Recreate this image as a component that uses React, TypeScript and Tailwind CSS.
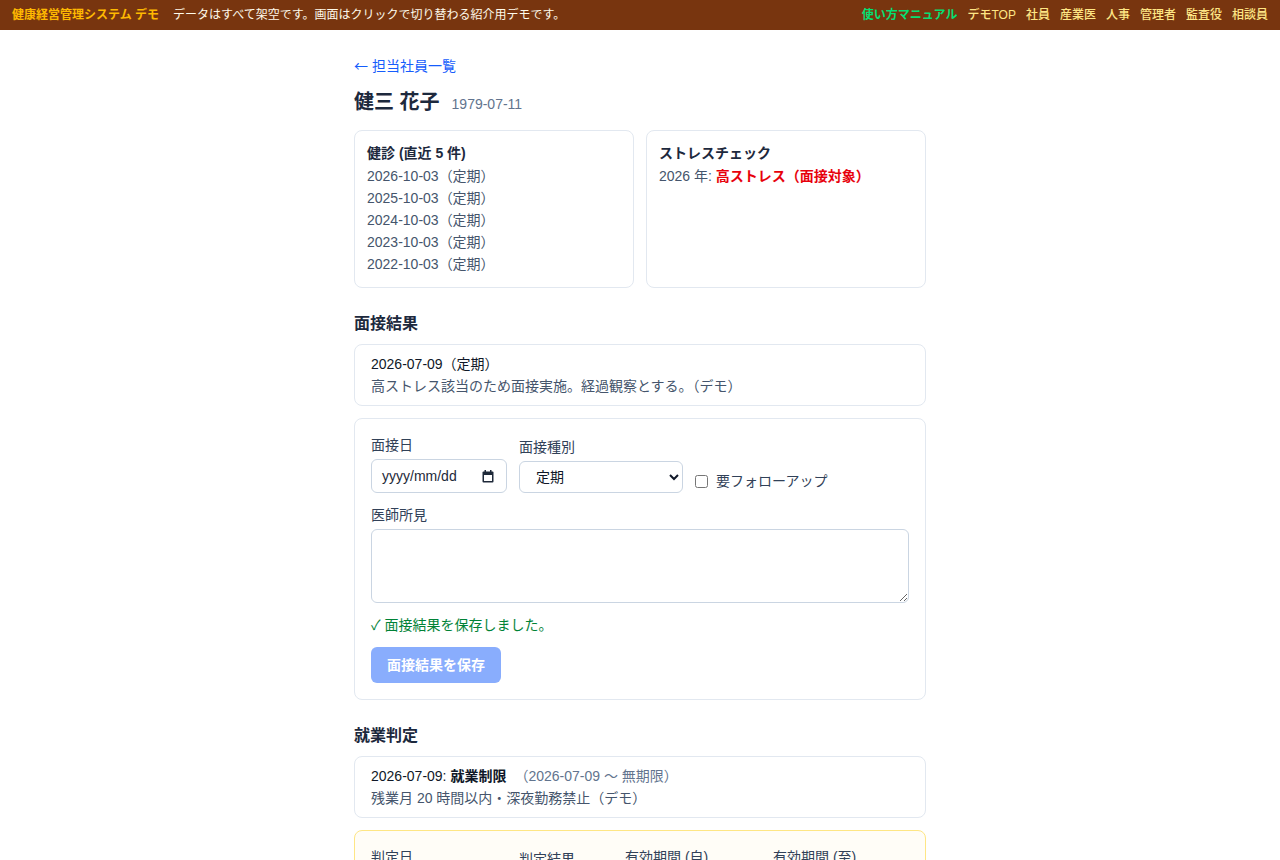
import React from "react";

const navLinks = ["デモTOP", "社員", "産業医", "人事", "管理者", "監査役", "相談員"];
const checkups = ["2026-10-03", "2025-10-03", "2024-10-03", "2023-10-03", "2022-10-03"];

const CalendarIcon = () => (
  <svg width="12" height="13" viewBox="0 0 12 13" className="text-gray-800">
    <rect x="0.5" y="1.5" width="11" height="11" rx="1" fill="currentColor" />
    <rect x="2" y="5" width="8" height="6" fill="white" />
    <rect x="2.5" y="0" width="1.5" height="3" fill="currentColor" />
    <rect x="8" y="0" width="1.5" height="3" fill="currentColor" />
  </svg>
);

const DateField = () => (
  <div className="flex h-[34px] w-[136px] items-center justify-between rounded-md border border-slate-300 bg-white pl-[10px] pr-3 text-sm text-gray-800">
    <span>yyyy/mm/dd</span>
    <CalendarIcon />
  </div>
);

const TopBar = () => (
  <header className="flex h-[30px] items-center justify-between bg-[#78350f] px-3 text-xs">
    <div className="flex items-center gap-[14px]">
      <span className="font-bold text-amber-400">健康経営管理システム デモ</span>
      <span className="text-amber-50">データはすべて架空です。画面はクリックで切り替わる紹介用デモです。</span>
    </div>
    <nav className="flex items-center gap-2.5 font-medium">
      <a className="font-bold text-green-400">使い方マニュアル</a>
      {navLinks.map((l) => (
        <a key={l} className="text-amber-200">
          {l}
        </a>
      ))}
    </nav>
  </header>
);

export default function App() {
  return (
    <div className="min-h-screen bg-white font-['Liberation_Sans','Noto_Sans_CJK_JP',sans-serif]">
      <TopBar />
      <main className="mx-auto w-[572px] pt-[25px] pb-16">
        <a className="block text-sm leading-5 text-blue-600">
          <span className="font-['Noto_Sans_CJK_JP',sans-serif]">←</span> 担当社員一覧
        </a>
        <div className="mt-3 flex items-baseline">
          <h1 className="text-xl font-bold leading-7 text-slate-800">健三 花子</h1>
          <span className="ml-3 text-sm text-slate-500">1979-07-11</span>
        </div>

        <div className="mt-[14px] grid grid-cols-2 gap-3">
          <div className="rounded-lg border border-slate-200 p-3">
            <h2 className="text-sm font-bold leading-5 text-slate-800">健診 (直近 5 件)</h2>
            <ul className="mt-0.5 text-sm leading-[22px] text-slate-600">
              {checkups.map((d) => (
                <li key={d}>{d}（定期）</li>
              ))}
            </ul>
          </div>
          <div className="rounded-lg border border-slate-200 p-3">
            <h2 className="text-sm font-bold leading-5 text-slate-800">ストレスチェック</h2>
            <p className="mt-0.5 text-sm leading-[22px] text-slate-600">
              2026 年: <span className="font-bold text-red-600">高ストレス（面接対象）</span>
            </p>
          </div>
        </div>

        <h2 className="mt-6 mb-2 text-base font-bold leading-6 text-slate-800">面接結果</h2>
        <div className="rounded-lg border border-slate-200 px-4 py-2 text-sm leading-[22px]">
          <p className="text-gray-900">2026-07-09（定期）</p>
          <p className="text-slate-600">高ストレス該当のため面接実施。経過観察とする。（デモ）</p>
        </div>

        <div className="mt-3 rounded-lg border border-slate-200 p-4">
          <div className="flex items-end gap-3">
            <label className="block">
              <span className="block text-sm leading-5 text-slate-700">面接日</span>
              <div className="mt-1">
                <DateField />
              </div>
            </label>
            <label className="block">
              <span className="block text-sm leading-5 text-slate-700">面接種別</span>
              <select className="mt-1 h-8 w-[164px] rounded-md border border-slate-300 bg-white px-3 text-sm text-gray-900">
                <option>定期</option>
                <option>臨時</option>
              </select>
            </label>
            <label className="flex items-center pb-0.5 text-sm leading-5 text-slate-700">
              <input type="checkbox" className="h-[13px] w-[13px]" />
              <span className="ml-2">要フォローアップ</span>
            </label>
          </div>

          <label className="mt-3 block">
            <span className="block text-sm leading-5 text-slate-700">医師所見</span>
            <textarea className="mt-1 block h-[74px] w-full rounded-md border border-slate-300 px-3 py-2 text-sm" />
          </label>

          <p className="mt-3 text-sm leading-5 text-green-700">✓ 面接結果を保存しました。</p>

          <button
            disabled
            className="mt-3 h-9 rounded-md bg-blue-600 px-4 text-sm font-bold text-white opacity-50"
          >
            面接結果を保存
          </button>
        </div>

        <h2 className="mt-6 mb-2 text-base font-bold leading-6 text-slate-800">就業判定</h2>
        <div className="rounded-lg border border-slate-200 px-4 py-2 text-sm leading-[22px]">
          <p className="text-gray-900">
            2026-07-09: <span className="font-bold">就業制限</span>
            <span className="ml-2 text-slate-500">（2026-07-09 〜 無期限）</span>
          </p>
          <p className="text-slate-600">残業月 20 時間以内・深夜勤務禁止（デモ）</p>
        </div>

        <div className="mt-3 rounded-lg border border-amber-200 bg-amber-50/40 p-4">
          <div className="flex items-end gap-3">
            <label className="block">
              <span className="block text-sm leading-5 text-slate-700">判定日</span>
              <div className="mt-1">
                <DateField />
              </div>
            </label>
            <label className="block">
              <span className="block text-sm leading-5 text-slate-700">判定結果</span>
              <select className="mt-1 h-8 w-[94px] rounded-md border border-slate-300 bg-white px-3 text-sm text-gray-900">
                <option>通常</option>
                <option>就業制限</option>
                <option>休業</option>
              </select>
            </label>
            <label className="block">
              <span className="block text-sm leading-5 text-slate-700">有効期間 (自)</span>
              <div className="mt-1">
                <DateField />
              </div>
            </label>
            <label className="block">
              <span className="block text-sm leading-5 text-slate-700">有効期間 (至)</span>
              <div className="mt-1">
                <DateField />
              </div>
            </label>
          </div>
          <label className="mt-3 block">
            <span className="block text-sm leading-5 text-slate-700">措置内容</span>
            <textarea className="mt-1 block h-[74px] w-full rounded-md border border-slate-300 bg-white px-3 py-2 text-sm" />
          </label>
          <button className="mt-3 h-9 rounded-md bg-blue-600 px-4 text-sm font-bold text-white">
            就業判定を保存
          </button>
        </div>
      </main>
    </div>
  );
}
